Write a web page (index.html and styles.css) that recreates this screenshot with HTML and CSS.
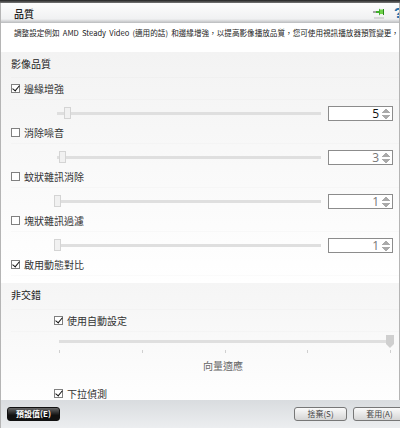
FILE: index.html
```html
<!DOCTYPE html>
<html lang="zh-Hant">
<head>
  <meta charset="UTF-8" />
  <title>品質</title>
  <link rel="stylesheet" href="styles.css">
</head>
<body>
  <div class="panel">
    <div class="top-edge"></div>
    <header class="head">
      <h1>品質</h1>
      <svg class="pin" viewBox="0 0 12 11" aria-hidden="true">
        <path d="M0 4h3" stroke="#555" fill="none"/>
        <path d="M3 3h3V1.500l1-1V7.500l-1-1V5H3z" fill="#3fae2a"/>
        <path d="M7 1.500h3.500v4.500H7z" fill="#6fd24a"/>
        <path d="M10.500 1v6" stroke="#2c8a1c" fill="none"/>
        <path d="M1 10h10" stroke="#bbb" fill="none"/>
      </svg>
      <span class="help">?</span>
    </header>
    <p class="desc">調整設定例如 AMD Steady Video (適用的話) 和邊緣增強，以提高影像播放品質，您可使用視訊播放器預覽變更，</p>

    <div class="content">
      <section class="group">
        <h2>影像品質</h2>
        <label class="check-row"><span class="box on"></span>邊緣增強</label>
        <div class="slider-row">
          <div class="slider"><span class="thumb" style="left:7px"></span></div>
          <div class="spin active"><span>5</span><i class="arrows"></i></div>
        </div>
        <label class="check-row"><span class="box"></span>消除噪音</label>
        <div class="slider-row">
          <div class="slider"><span class="thumb" style="left:2px"></span></div>
          <div class="spin"><span>3</span><i class="arrows"></i></div>
        </div>
        <label class="check-row"><span class="box"></span>蚊狀雜訊消除</label>
        <div class="slider-row wide">
          <div class="slider"><span class="thumb" style="left:0"></span></div>
          <div class="spin"><span>1</span><i class="arrows"></i></div>
        </div>
        <label class="check-row"><span class="box"></span>塊狀雜訊過濾</label>
        <div class="slider-row wide">
          <div class="slider"><span class="thumb" style="left:0"></span></div>
          <div class="spin"><span>1</span><i class="arrows"></i></div>
        </div>
        <label class="check-row"><span class="box on"></span>啟用動態對比</label>
      </section>

      <section class="group second">
        <h2>非交錯</h2>
        <label class="check-row inner"><span class="box on"></span>使用自動設定</label>
        <div class="range-row">
          <div class="slider"><span class="thumb pointer"></span></div>
          <div class="ticks"><i></i><i></i><i></i><i></i><i></i></div>
        </div>
        <div class="range-label">向量適應</div>
        <label class="check-row inner"><span class="box on"></span>下拉偵測</label>
      </section>
    </div>

    <footer class="foot">
      <button class="btn dark">預設值(E)</button>
      <button class="btn push">捨棄(S)</button>
      <button class="btn">套用(A)</button>
    </footer>
  </div>
</body>
</html>
```

FILE: styles.css
```css
* {
  box-sizing: border-box;
  margin: 0;
  padding: 0;
}
html, body {
  width: 400px;
  height: 428px;
  overflow: hidden;
}
body {
  font-family: "Noto Sans CJK TC", "Liberation Sans", sans-serif;
  color: #333;
  background: #fff;
}
.panel {
  width: 400px;
  height: 428px;
  display: flex;
  flex-direction: column;
  border-left: 1px solid #b5b5b5;
  border-right: 1px solid #b5b5b5;
}
.top-edge {
  height: 3px;
  margin: 0 -1px;
  background: linear-gradient(#222, #777);
}

/* Title bar */
.head {
  height: 20px;
  display: flex;
  align-items: center;
  padding-left: 13px;
  background: linear-gradient(#fdfdfd, #f0f1f2 80%, #b9bbbd);
}
.head h1 {
  flex: 1;
  font-size: 10px;
  font-weight: 500;
  color: #222;
}
.pin {
  width: 12px;
  height: 11px;
  margin-right: 9px;
}
.help {
  width: 5px;
  overflow: hidden;
  font: bold 14px "Liberation Sans", sans-serif;
  color: #1f6fa8;
}
.desc {
  height: 29px;
  padding: 3px 0 0 13px;
  white-space: nowrap;
  font-size: 7.6px;
  word-spacing: 1.5px;
  line-height: 14px;
  color: #222;
  background: #fff;
}

/* Scrolling part */
.content {
  flex: 1;
  height: 0;
  overflow: hidden;
}
.group {
  height: 231px;
  padding-left: 10px;
  background: linear-gradient(#f3f3f3, #fff);
}
.group.second {
  height: 147px;
  background: linear-gradient(#f5f5f5, #fff 90%);
}
h2 {
  height: 26px;
  font-size: 10px;
  font-weight: 400;
  line-height: 24px;
  color: #222;
  border-bottom: 1px solid rgba(0, 0, 0, 0.015);
}
.second h2 {
  height: 27px;
}
.check-row {
  height: 22px;
  display: flex;
  align-items: center;
  gap: 4px;
  font-size: 10px;
  color: #333;
  border-bottom: 1px solid rgba(0, 0, 0, 0.015);
}
.check-row.inner {
  padding-left: 43px;
}
.box {
  width: 9px;
  height: 9px;
  border: 1px solid #808080;
  background: #fff;
  position: relative;
}
.box.on::after {
  content: "";
  position: absolute;
  left: 2px;
  top: -1px;
  width: 3px;
  height: 6px;
  border-right: 1px solid #111;
  border-bottom: 1px solid #111;
  transform: rotate(40deg);
}

/* Sliders */
.slider-row {
  height: 22px;
  display: flex;
  align-items: center;
  gap: 7px;
  padding: 5px 6px 0 46px;
}
.slider-row.wide {
  padding-left: 43px;
}
.slider {
  flex: 1;
  height: 3px;
  background: #dfdfdf;
  position: relative;
}
.range-row .slider {
  flex: none;
}
.thumb {
  position: absolute;
  top: -5px;
  width: 7px;
  height: 12px;
  background: #f1f1f1;
  border: 1px solid #d4d4d4;
}
.thumb.pointer {
  right: -1px;
  top: -5px;
  height: 13px;
  width: 8px;
  border: 0;
  background: #cfcfcf;
  clip-path: polygon(0 0, 100% 0, 100% 70%, 50% 100%, 0 70%);
}
.spin {
  width: 65px;
  height: 15px;
  display: flex;
  align-items: center;
  justify-content: flex-end;
  gap: 3px;
  padding-right: 2px;
  border: 1px solid #8c8c8c;
  background: #fff;
  font: 12px "Open Sans", sans-serif;
  color: #777;
}
.spin.active {
  color: #111;
}
.arrows {
  width: 8px;
  height: 12px;
  background:
    linear-gradient(to top left, #aaa 50%, transparent 50%) 0 0 / 50% 5px no-repeat,
    linear-gradient(to top right, #aaa 50%, transparent 50%) 100% 0 / 50% 5px no-repeat,
    linear-gradient(to bottom left, #aaa 50%, transparent 50%) 0 100% / 50% 5px no-repeat,
    linear-gradient(to bottom right, #aaa 50%, transparent 50%) 100% 100% / 50% 5px no-repeat;
}
.range-row {
  height: 23px;
  padding: 8px 6px 0 48px;
}
.ticks {
  display: flex;
  justify-content: space-between;
  margin-top: 7px;
  padding-right: 2px;
}
.ticks i {
  width: 1px;
  height: 3px;
  background: #d0d0d0;
}
.range-label {
  height: 28px;
  padding: 2px 0 0 36px;
  text-align: center;
  font-size: 10px;
  color: #666;
  line-height: 18px;
}

/* Bottom buttons */
.foot {
  height: 28px;
  flex-shrink: 0;
  display: flex;
  align-items: center;
  gap: 6px;
  padding: 0 0 0 6px;
  margin-right: -7px;
  background: linear-gradient(#d9dcdf, #eceef0);
}
.btn {
  width: 53px;
  height: 14px;
  flex-shrink: 0;
  font-family: inherit;
  font-size: 8px;
  line-height: 12px;
  color: #444;
  border: 1px solid #777;
  border-radius: 3px;
  background: linear-gradient(#fafafa, #d5d5d5);
}
.btn.dark {
  color: #fff;
  font-weight: 700;
  border-color: #111;
  background: linear-gradient(#666, #111 60%);
}
.btn.push {
  margin-left: auto;
}
```
